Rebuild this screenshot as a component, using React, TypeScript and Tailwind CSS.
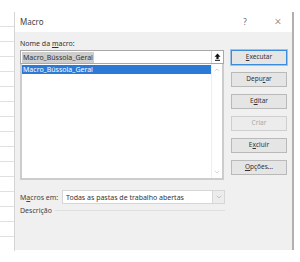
import { ChevronUp, ChevronDown } from 'lucide-react';

function Btn({ pre, u, post, primary, disabled }: { pre?: string; u: string; post: string; primary?: boolean; disabled?: boolean }) {
  return (
    <div
      className={`h-[15px] w-[56px] flex items-center justify-center text-[6.5px] leading-none ${
        primary ? 'bg-[#e5e5e5] border border-[#3b8ddb] outline outline-1 outline-[#9cc4ea]' : 'bg-[#e5e5e5] border border-[#b9b9b9]'
      } ${disabled ? 'text-[#a8a8a8] border-[#cfcfcf] bg-[#ececec]' : 'text-[#333]'}`}
    >
      {pre}
      <span className={disabled ? '' : 'underline underline-offset-1'}>{u}</span>
      {post}
    </div>
  );
}

export default function App() {
  return (
    <div className="w-[300px] h-[262px] bg-white flex pt-[12px] font-['Noto_Sans',sans-serif] text-[#333] overflow-hidden">
      {/* spreadsheet grid behind the dialog */}
      <div className="w-[15px] h-[239px] border-r border-[#d4d4d4] bg-[repeating-linear-gradient(to_bottom,transparent_0px,transparent_14px,#e0e0e0_14px,#e0e0e0_15px)]" />
      <div className="w-[279px] h-[238px] flex flex-col border-r-2 border-[#b0b0b0]">
        {/* title bar */}
        <div className="h-[20px] bg-white flex items-center pl-[5px] text-[8px] text-[#444]">
          <span className="flex-1">Macro</span>
          <span className="w-[10px] text-center text-[#666] text-[8px]">?</span>
          <span className="w-[22px]" />
          <span className="w-[12px] text-center text-[#777] text-[12px] font-light leading-none">×</span>
          <span className="w-[8px]" />
        </div>
        {/* body */}
        <div className="flex-1 bg-[#f0f0f0] pl-[5px] pr-[5px] flex flex-col">
          <div className="h-[18px] flex items-end pb-[3px] text-[7px] leading-none">
            Nome da&nbsp;<span className="underline underline-offset-1">m</span>acro:
          </div>
          <div className="flex gap-[7px]">
            <div className="w-[205px] flex flex-col">
              <div className="h-[14px] bg-white border border-[#a8a8a8] flex items-stretch">
                <div className="flex-1 flex items-center pl-[1px]">
                  <span className="bg-[#cdcdcd] text-[7px] leading-none px-[1px] py-[2px] text-[#333]">Macro_Bússola_Geral</span>
                </div>
                <div className="w-[12px] border-l border-[#d6d6d6] flex items-center justify-center">
                  <svg width="7" height="8" viewBox="0 0 7 8">
                    <path d="M3.5 0.5 L6.5 3.8 H4.6 V6 H2.4 V3.8 H0.5 Z" fill="#111" />
                    <rect x="1" y="6.8" width="5" height="1" fill="#111" />
                  </svg>
                </div>
              </div>
              <div className="h-[116px] bg-white border-2 border-[#cccccc] border-t-0 flex">
                <div className="flex-1 pt-[1px]">
                  <div className="h-[9px] bg-[#2b7ad6] text-white text-[7px] leading-none flex items-center pl-[1px]">
                    Macro_Bússola_Geral
                  </div>
                </div>
                <div className="w-[11px] flex flex-col items-center justify-between py-[2px] border-l border-[#efefef]">
                  <ChevronUp className="w-[8px] h-[8px] text-[#b0b0b0]" strokeWidth={1.5} />
                  <ChevronDown className="w-[8px] h-[8px] text-[#b0b0b0]" strokeWidth={1.5} />
                </div>
              </div>
            </div>
            <div className="flex flex-col gap-[7px]">
              <Btn u="E" post="xecutar" primary />
              <Btn pre="Depu" u="r" post="ar" />
              <Btn pre="E" u="d" post="itar" />
              <Btn pre="Cr" u="i" post="ar" disabled />
              <Btn pre="E" u="x" post="cluir" />
              <Btn u="O" post="pções..." />
            </div>
          </div>
          <div className="flex items-center mt-[10px] w-[205px]">
            <span className="w-[42px] text-[7px] leading-none text-[#444]">
              M<span className="underline underline-offset-1">a</span>cros em:
            </span>
            <div className="flex-1 h-[14px] bg-white border border-[#d6d6d6] flex items-stretch">
              <span className="flex-1 flex items-center pl-[3px] text-[7px] leading-none">Todas as pastas de trabalho abertas</span>
              <div className="w-[12px] bg-[#ececec] border-l border-[#d6d6d6] flex items-center justify-center">
                <ChevronDown className="w-[8px] h-[8px] text-[#999]" strokeWidth={1.5} />
              </div>
            </div>
          </div>
          <div className="flex items-center mt-[3px] w-[205px] gap-[3px]">
            <span className="text-[7px] leading-none text-[#444]">Descrição</span>
            <div className="flex-1 h-px bg-[#dedede]" />
          </div>
        </div>
      </div>
    </div>
  );
}
